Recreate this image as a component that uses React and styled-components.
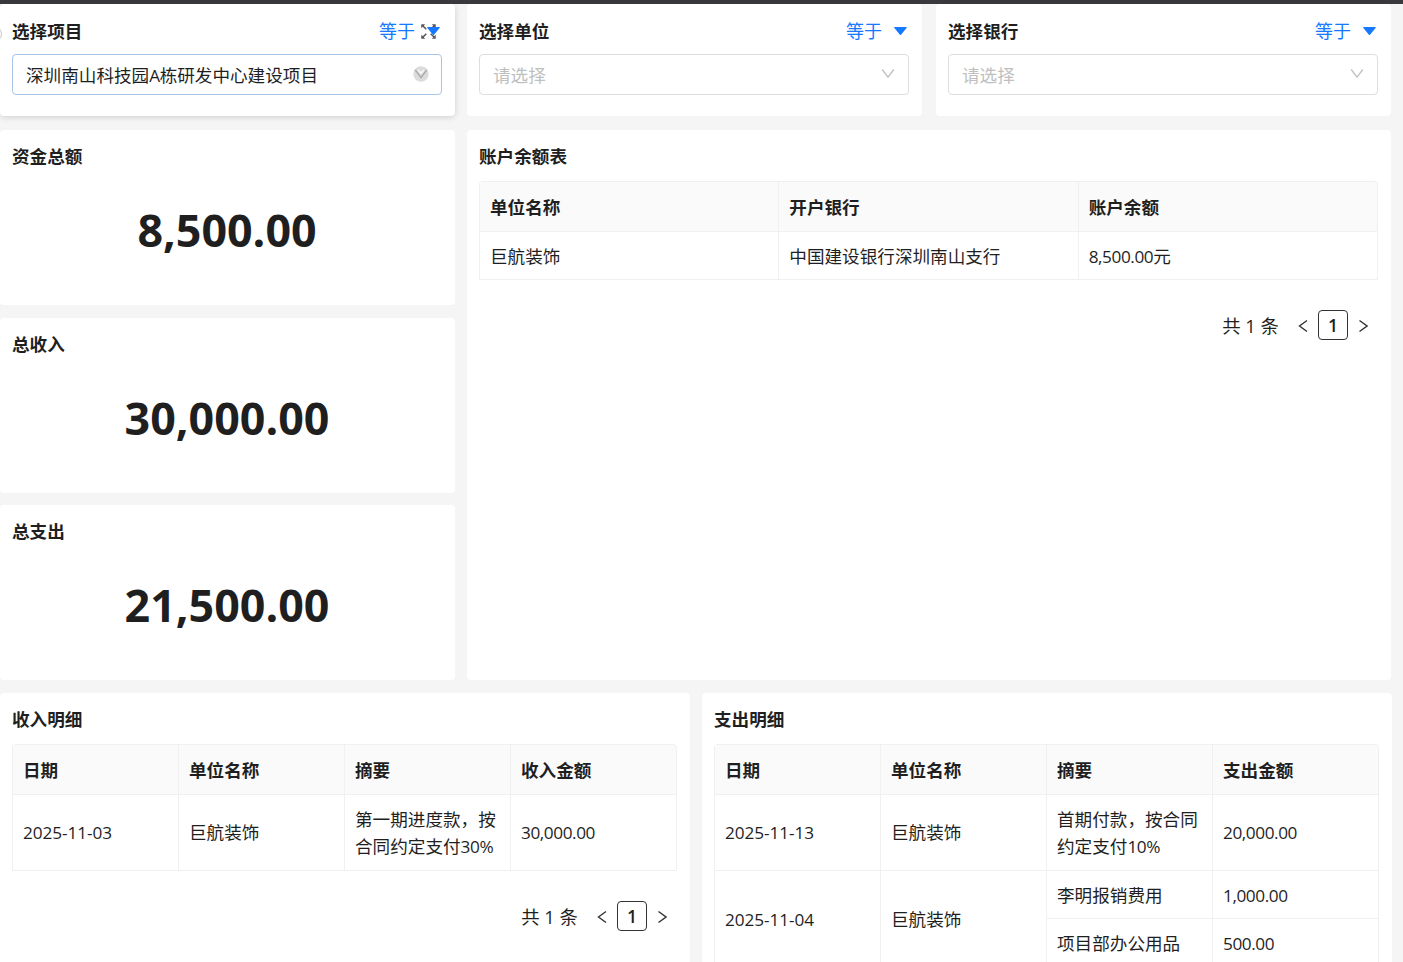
import { Fragment } from 'react'
import styled, { createGlobalStyle } from 'styled-components'

const GlobalStyle = createGlobalStyle`
  * {
    box-sizing: border-box;
  }
  body {
    margin: 0;
    overflow: hidden;
    background: #f5f5f5;
  }
`

const Page = styled.div`
  width: 1403px;
  height: 962px;
  overflow: hidden;
  padding-right: 11px;
  border-top: 4px solid #39393b;
  background: #f5f5f5;
  color: #1f1f1f;
  font-family: 'Open Sans', 'Noto Sans CJK SC', sans-serif;
  font-size: 17.6px;
  line-height: 27px;
`

const Filters = styled.div`
  display: grid;
  grid-template-columns: 467px 469px 455px;
  height: 126px;
`

const Card = styled.section`
  background: #fff;
  border-radius: 4px;
  padding: 13px 13px 0 12px;
  min-width: 0;
`

const FilterCard = styled(Card)`
  position: relative;
  width: 455px;
  height: 112px;
  padding-top: 14px;
  box-shadow: ${props => (props.$active ? '0 1px 6px rgba(0, 0, 0, 0.16)' : 'none')};
`

const FilterHead = styled.div`
  display: flex;
  justify-content: space-between;
  align-items: center;
  height: 27px;
`

const Title = styled.h3`
  margin: 0;
  font-size: 17.6px;
  font-weight: 700;
  line-height: 27px;
`

const Operator = styled.div`
  position: relative;
  z-index: 1;
  display: flex;
  align-items: center;
  gap: 12px;
  margin-right: 2px;
  color: #1677ff;
  line-height: 27px;
  font-size: 18px;

  svg {
    display: block;
    margin-top: -1px;
  }
`

const ExpandHandle = styled.span`
  position: absolute;
  top: 20px;
  left: 421px;

  svg {
    display: block;
  }
`

const RadioEdge = styled.span`
  position: absolute;
  top: 21px;
  left: -16px;
  width: 18px;
  height: 18px;
  border: 1px solid #c9c9c9;
  border-radius: 50%;
`

const Select = styled.div`
  display: flex;
  align-items: center;
  justify-content: space-between;
  height: 41px;
  margin-top: 9px;
  padding: 0 12px 0 14px;
  border: 1px solid ${props => (props.$active ? '#a9c4ea' : '#dedede')};
  border-radius: 4px;
  color: ${props => (props.$active ? '#1f1f1f' : '#bfbfbf')};

  svg {
    display: block;
    margin-top: -1px;
  }
`

const SelectValue = styled.span`
  margin-left: -1px;
  padding-top: 2px;
`

const Middle = styled.div`
  display: grid;
  grid-template-columns: 455px 924px;
  gap: 12px;
  height: 563px;
`

const Stats = styled.div`
  display: grid;
  grid-template-rows: 175px 175px 175px;
  row-gap: 12.5px;
`

const Amount = styled.div`
  padding-top: 28px;
  text-align: center;
  font-size: 44.8px;
  font-weight: 700;
  line-height: 64px;
`

const BalanceCard = styled(Card)`
  height: 550px;
`

const Details = styled.div`
  display: grid;
  grid-template-columns: 690px 690px;
  gap: 12px;
  height: 300px;
`

const Table = styled.table`
  width: 100%;
  margin-top: 11px;
  table-layout: fixed;
  border-spacing: 0;
  border-top: 1px solid #f0f0f0;
  border-left: 1px solid #f0f0f0;
  border-radius: 4px 4px 0 0;
`

const Th = styled.th`
  height: 50px;
  padding: 2px 10px 0;
  background: #fafafa;
  border-right: 1px solid #f0f0f0;
  border-bottom: 1px solid #f0f0f0;
  text-align: left;
  font-weight: 700;

  &:last-child {
    border-top-right-radius: 4px;
  }
`

const Td = styled.td`
  height: ${props => props.$h || 48}px;
  padding: ${props => (props.$tall ? 0 : 2)}px 10px 0;
  border-right: 1px solid #f0f0f0;
  border-bottom: 1px solid #f0f0f0;
  white-space: nowrap;
`

const Latin = styled.span`
  font-size: 17.2px;
  letter-spacing: ${props => (props.$date ? '-0.08px' : '-0.42px')};
`

const Pager = styled.div`
  display: flex;
  justify-content: flex-end;
  align-items: center;
  height: 30px;
  margin-top: 30px;
`

const Total = styled.span`
  margin-right: 9px;
  font-size: 18.4px;
`

const PageStep = styled.span`
  display: flex;
  align-items: center;
  justify-content: center;
  width: 30px;
  height: 30px;

  svg {
    margin-top: 2px;
  }
`

const PageNumber = styled(PageStep)`
  border: 1px solid #333;
  border-radius: 4px;
  font-weight: 600;
`

const Caret = () => (
    <svg width="13" height="9" viewBox="0 0 13 9">
        <path d="M.8 0h11.4c.5 0 .7.5.4.9L7 7.7c-.3.4-.8.4-1.1 0L.4.9C.1.5.3 0 .8 0z" fill="#1677ff" />
    </svg>
)

const Chevron = () => (
    <svg width="16" height="12" viewBox="0 0 16 12">
        <path d="M2.2 1.5 8 9.2l5.8-7.7" fill="none" stroke="#bfbfbf" strokeWidth="1.3" />
    </svg>
)

const ClearChevron = () => (
    <svg width="16" height="16" viewBox="0 0 16 16">
        <circle cx="8" cy="8" r="7.7" fill="#dcdcdc" />
        <path d="m2.3 4 5.7 7.6L13.7 4" fill="none" stroke="#aaa" strokeWidth="1.3" />
        <path d="m5.2 4.2 2.8 3 2.8-3" fill="none" stroke="#fff" strokeWidth="1.2" />
    </svg>
)

const Expand = () => (
    <svg width="15" height="15" viewBox="0 0 15 15">
        <path
            d="m1.5 1.5 3.8 3.8M13.5 1.5 9.7 5.3M1.5 13.5l3.8-3.8M13.5 13.5 9.7 9.7"
            fill="none"
            stroke="#555"
            strokeWidth="1.5"
        />
        <path d="M.3.3h3.9L.3 4.2zM14.7.3v3.9L10.8.3zM.3 14.7v-3.9l3.9 3.9zM14.7 14.7h-3.9l3.9-3.9z" fill="#555" />
    </svg>
)

const Arrow = ({ next }) => (
    <svg width="10" height="14" viewBox="0 0 10 14">
        <path
            d={next ? 'M1.5 1.5 9 7l-7.5 5.5' : 'M9 1.5 1.5 7 9 12.5'}
            fill="none"
            stroke="#333"
            strokeWidth="1.4"
        />
    </svg>
)

// Digits and latin letters are set a little tighter than the Chinese text
const Text = ({ children }) =>
    children.split(/([\dA-Z.,%-]+)/).map((part, i) =>
        i % 2 ? (
            <Latin key={i} $date={part.includes('-')}>
                {part}
            </Latin>
        ) : (
            <Fragment key={i}>{part}</Fragment>
        )
    )

const Filter = ({ label, value }) => (
    <FilterCard $active={!!value}>
        {value && <RadioEdge />}
        <FilterHead>
            <Title>{label}</Title>
            {value && (
                <ExpandHandle>
                    <Expand />
                </ExpandHandle>
            )}
            <Operator>
                等于
                <Caret />
            </Operator>
        </FilterHead>
        <Select $active={!!value}>
            <SelectValue>
                <Text>{value || '请选择'}</Text>
            </SelectValue>
            {value ? <ClearChevron /> : <Chevron />}
        </Select>
    </FilterCard>
)

const Stat = ({ label, amount }) => (
    <Card>
        <Title>{label}</Title>
        <Amount>{amount}</Amount>
    </Card>
)

const Head = ({ columns }) => (
    <thead>
        <tr>
            {columns.map(name => (
                <Th key={name}>{name}</Th>
            ))}
        </tr>
    </thead>
)

const Pagination = () => (
    <Pager>
        <Total>共 1 条</Total>
        <PageStep>
            <Arrow />
        </PageStep>
        <PageNumber>1</PageNumber>
        <PageStep>
            <Arrow next />
        </PageStep>
    </Pager>
)

const App = () => {
    return (
        <Page>
            <GlobalStyle />
            <Filters>
                <Filter label="选择项目" value="深圳南山科技园A栋研发中心建设项目" />
                <Filter label="选择单位" />
                <Filter label="选择银行" />
            </Filters>
            <Middle>
                <Stats>
                    <Stat label="资金总额" amount="8,500.00" />
                    <Stat label="总收入" amount="30,000.00" />
                    <Stat label="总支出" amount="21,500.00" />
                </Stats>
                <BalanceCard>
                    <Title>账户余额表</Title>
                    <Table>
                        <Head columns={['单位名称', '开户银行', '账户余额']} />
                        <tbody>
                            <tr>
                                <Td>巨航装饰</Td>
                                <Td>中国建设银行深圳南山支行</Td>
                                <Td><Text>8,500.00元</Text></Td>
                            </tr>
                        </tbody>
                    </Table>
                    <Pagination />
                </BalanceCard>
            </Middle>
            <Details>
                <Card>
                    <Title>收入明细</Title>
                    <Table>
                        <Head columns={['日期', '单位名称', '摘要', '收入金额']} />
                        <tbody>
                            <tr>
                                <Td $tall $h={76}><Text>2025-11-03</Text></Td>
                                <Td $tall>巨航装饰</Td>
                                <Td $tall>
                                    第一期进度款，按
                                    <br />
                                    <Text>合同约定支付30%</Text>
                                </Td>
                                <Td $tall><Text>30,000.00</Text></Td>
                            </tr>
                        </tbody>
                    </Table>
                    <Pagination />
                </Card>
                <Card>
                    <Title>支出明细</Title>
                    <Table>
                        <Head columns={['日期', '单位名称', '摘要', '支出金额']} />
                        <tbody>
                            <tr>
                                <Td $tall $h={76}><Text>2025-11-13</Text></Td>
                                <Td $tall>巨航装饰</Td>
                                <Td $tall>
                                    首期付款，按合同
                                    <br />
                                    <Text>约定支付10%</Text>
                                </Td>
                                <Td $tall><Text>20,000.00</Text></Td>
                            </tr>
                            <tr>
                                <Td rowSpan={2} $h={96}><Text>2025-11-04</Text></Td>
                                <Td rowSpan={2} $h={96}>巨航装饰</Td>
                                <Td>李明报销费用</Td>
                                <Td><Text>1,000.00</Text></Td>
                            </tr>
                            <tr>
                                <Td>项目部办公用品</Td>
                                <Td><Text>500.00</Text></Td>
                            </tr>
                        </tbody>
                    </Table>
                </Card>
            </Details>
        </Page>
    )
}

export default App
